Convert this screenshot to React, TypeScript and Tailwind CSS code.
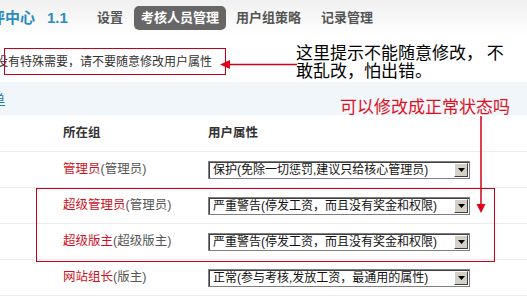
import React from "react";

const font = "font-['Liberation_Sans','Noto_Sans_CJK_SC',sans-serif]";

function Select({ text }: { text: string }) {
  return (
    <div className="relative flex h-[18px] w-[262px] items-center border border-[#7f7f7f] bg-white shadow-[inset_1px_1px_0_#404040]">
      <span className="pl-[4px] text-[12px] leading-[16px] text-[#111] whitespace-nowrap">{text}</span>
      <div className="absolute right-[1px] top-[1px] flex h-[14px] w-[14px] items-center justify-center border border-t-white border-l-white border-b-[#404040] border-r-[#404040] bg-[#d4d0c8]">
        <svg width="7" height="4" viewBox="0 0 7 4">
          <polygon points="0,0 7,0 3.5,4" fill="#000" />
        </svg>
      </div>
    </div>
  );
}

function Row({ name, group, value }: { name: string; group: string; value: string }) {
  return (
    <div className="flex h-[36px] items-center border-b border-[#ececec]">
      <div className="w-[208px] pl-[63px] text-[12.5px] whitespace-nowrap">
        <span className="text-[#cc1122]">{name}</span>
        <span className="text-[#555]">({group})</span>
      </div>
      <Select text={value} />
    </div>
  );
}

export default function App() {
  return (
    <div className={`relative h-[302px] w-[527px] overflow-hidden bg-white ${font}`}>
      {/* header */}
      <div className="flex h-[36px] items-center bg-gradient-to-b from-[#f0f0f0] to-white">
        <span className="ml-[-10px] text-[15px] font-bold text-[#2a8cbf] whitespace-nowrap">评中心</span>
        <span className="ml-[12px] text-[15px] font-bold text-[#2a8cbf]">1.1</span>
        <span className="ml-[29px] text-[13px] font-bold text-[#555]">设置</span>
        <span className="ml-[11px] rounded-[5px] bg-[#666] px-[7px] py-[2px] text-[13px] font-bold text-white">考核人员管理</span>
        <span className="ml-[10px] text-[13px] font-bold text-[#555]">用户组策略</span>
        <span className="ml-[20px] text-[13px] font-bold text-[#555]">记录管理</span>
      </div>

      {/* notice */}
      <div className="h-[46px] pt-[18px]">
        <div className="ml-[-4px] text-[12px] leading-[16px] text-[#333] whitespace-nowrap">没有特殊需要，请不要随意修改用户属性</div>
      </div>

      {/* blue bar */}
      <div className="h-[33px] bg-[#f1f6fb] pt-[5px]">
        <span className="ml-[-8px] text-[13px] leading-[16px] text-[#1a7fb0] underline">单</span>
      </div>

      {/* table header */}
      <div className="flex h-[37px] items-center border-b border-[#ececec] text-[12.5px] font-bold text-[#333]">
        <div className="w-[208px] pl-[63px]">所在组</div>
        <div>用户属性</div>
      </div>

      <Row name="管理员" group="管理员" value="保护(免除一切惩罚,建议只给核心管理员)" />
      <Row name="超级管理员" group="管理员" value="严重警告(停发工资，而且没有奖金和权限)" />
      <Row name="超级版主" group="超级版主" value="严重警告(停发工资，而且没有奖金和权限)" />
      <Row name="网站组长" group="版主" value="正常(参与考核,发放工资，最通用的属性)" />

      {/* annotations */}
      <div className="absolute left-[4px] top-[48px] h-[27px] w-[222px] border-[1.5px] border-[#c4001a]" />
      <div className="absolute left-[36px] top-[188px] h-[74px] w-[459px] border-[1.5px] border-[#c4001a]" />

      <div className="absolute left-[296px] top-[43px] text-[17px] leading-[18px] text-black whitespace-nowrap font-['Noto_Sans_CJK_SC',sans-serif]">
        <div>这里提示不能随意修改， 不</div>
        <div>敢乱改，怕出错。</div>
      </div>
      <div className="absolute left-[340px] top-[97px] text-[17px] leading-[18px] text-[#e0101e] whitespace-nowrap font-['Noto_Sans_CJK_SC',sans-serif]">
        可以修改成正常状态吗
      </div>

      <svg className="pointer-events-none absolute left-0 top-0" width="527" height="302">
        <line x1="228" y1="64.5" x2="297" y2="64.5" stroke="#d40016" strokeWidth="1.5" />
        <polygon points="220,64.5 230,60 230,69" fill="#e0001a" />
        <line x1="481" y1="116" x2="481" y2="205" stroke="#d40016" strokeWidth="1.5" />
        <polygon points="476.5,204 485.5,204 481,213" fill="#e0001a" />
      </svg>
    </div>
  );
}
